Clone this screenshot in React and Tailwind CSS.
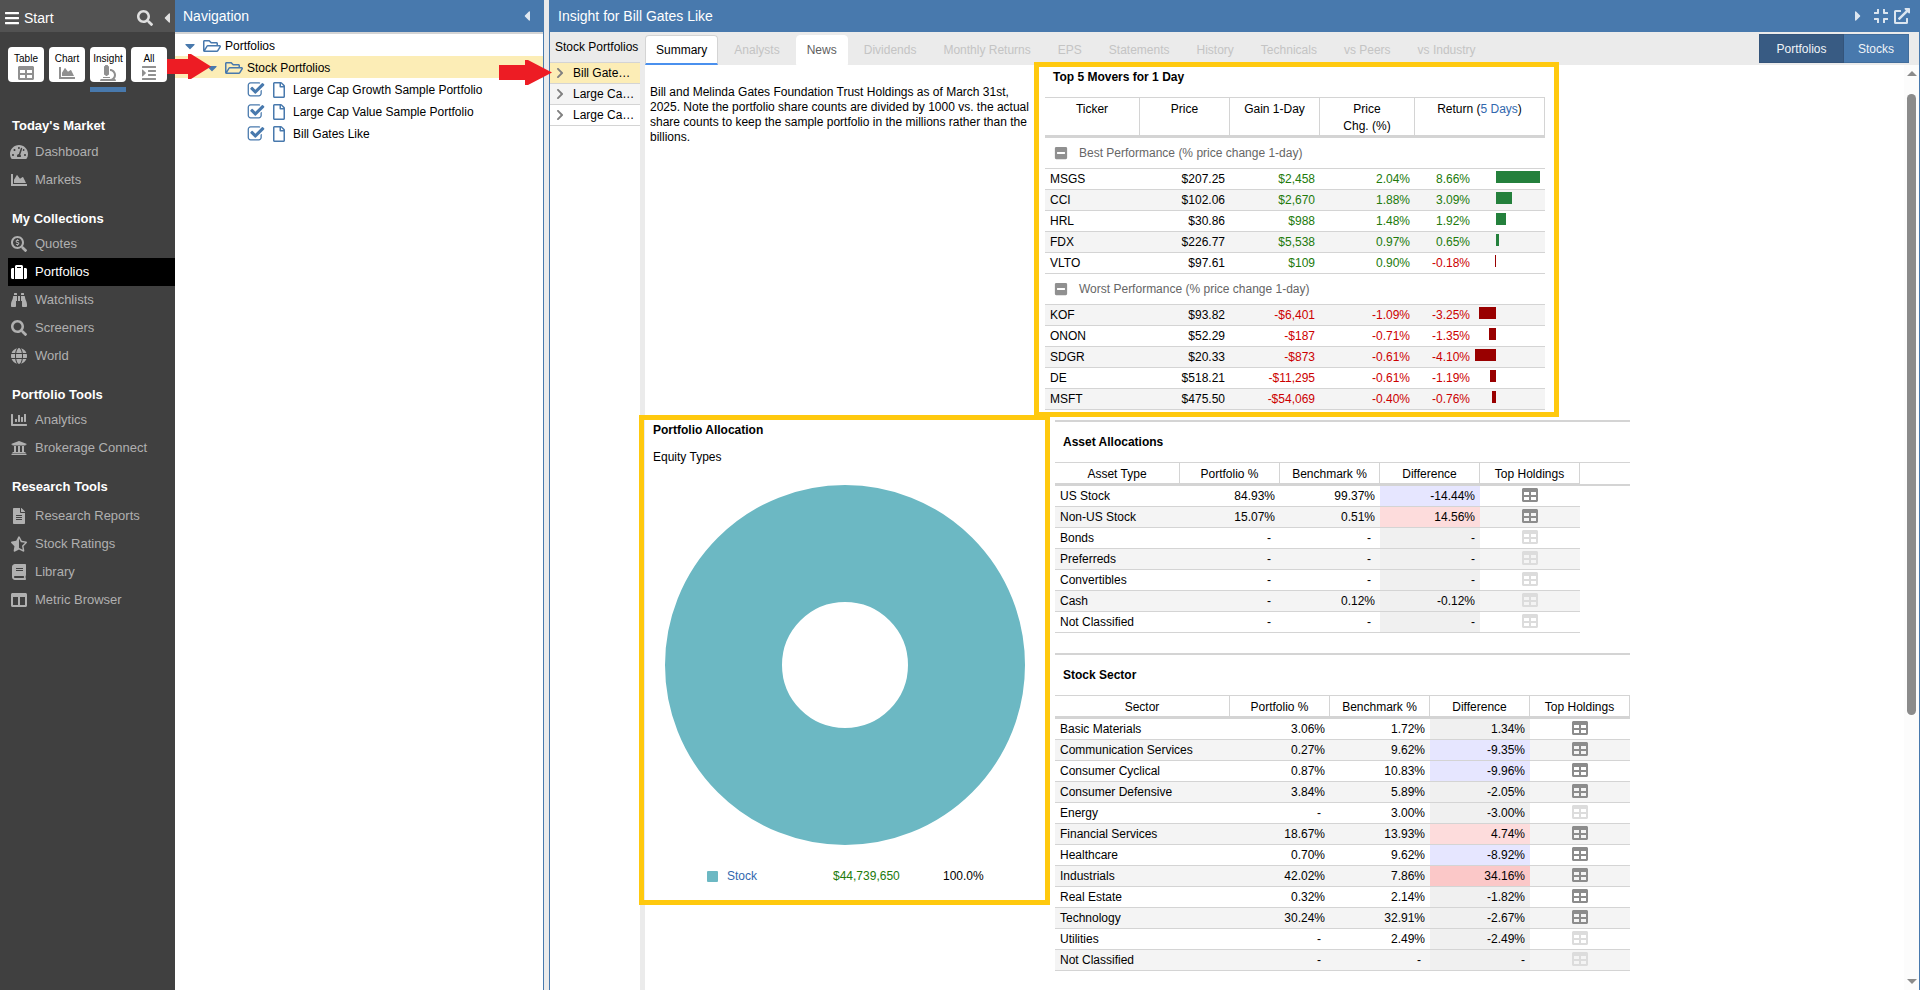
import React from "react";
import {
  FaBars, FaSearch, FaCaretLeft, FaCaretRight, FaCaretDown, FaTable, FaChartArea, FaMicroscope, FaIndent,
  FaTachometerAlt, FaSearchDollar, FaSuitcase, FaBinoculars, FaChartBar, FaUniversity,
  FaFileAlt, FaStarHalfAlt, FaBook, FaColumns, FaRegFolderOpen, FaRegFile, FaChevronRight,
  FaCompress, FaExternalLinkAlt, FaMinusSquare,
} from "react-icons/fa";
import { FaGlobe } from "react-icons/fa6";

const VIEWS = [
  { label: "Table", Icon: FaTable },
  { label: "Chart", Icon: FaChartArea },
  { label: "Insight", Icon: FaMicroscope, active: true },
  { label: "All", Icon: FaIndent },
];

const MENU = [
  { title: "Today's Market", head: "h-5 mt-[26px]", items: [["Dashboard", FaTachometerAlt], ["Markets", FaChartArea]] },
  { title: "My Collections", head: "h-9 pt-[17px]", items: [["Quotes", FaSearchDollar], ["Portfolios", FaSuitcase], ["Watchlists", FaBinoculars], ["Screeners", FaSearch], ["World", FaGlobe]] },
  { title: "Portfolio Tools", head: "h-9 pt-[17px]", items: [["Analytics", FaChartBar], ["Brokerage Connect", FaUniversity]] },
  { title: "Research Tools", head: "h-10 pt-[17px]", items: [["Research Reports", FaFileAlt], ["Stock Ratings", FaStarHalfAlt], ["Library", FaBook], ["Metric Browser", FaColumns]] },
];

const TABS = ["Summary", "Analysts", "News", "Dividends", "Monthly Returns", "EPS", "Statements", "History", "Technicals", "vs Peers", "vs Industry"];

const BEST = [
  ["MSGS", "$207.25", "$2,458", "2.04%", 8.66],
  ["CCI", "$102.06", "$2,670", "1.88%", 3.09],
  ["HRL", "$30.86", "$988", "1.48%", 1.92],
  ["FDX", "$226.77", "$5,538", "0.97%", 0.65],
  ["VLTO", "$97.61", "$109", "0.90%", -0.18],
];
const WORST = [
  ["KOF", "$93.82", "-$6,401", "-1.09%", -3.25],
  ["ONON", "$52.29", "-$187", "-0.71%", -1.35],
  ["SDGR", "$20.33", "-$873", "-0.61%", -4.1],
  ["DE", "$518.21", "-$11,295", "-0.61%", -1.19],
  ["MSFT", "$475.50", "-$54,069", "-0.40%", -0.76],
];

const GREY = "bg-[#f0f0f0]";
const BLUE = "bg-[#e6e6ff]";
const PINK = "bg-[#fddcdc]";
const RED = "bg-[#fbc8c8]";

const ASSETS = [
  ["US Stock", "84.93%", "99.37%", "-14.44%", BLUE],
  ["Non-US Stock", "15.07%", "0.51%", "14.56%", PINK],
  ["Bonds", "-", "-", "-", GREY],
  ["Preferreds", "-", "-", "-", GREY],
  ["Convertibles", "-", "-", "-", GREY],
  ["Cash", "-", "0.12%", "-0.12%", GREY],
  ["Not Classified", "-", "-", "-", GREY],
];
const SECTORS = [
  ["Basic Materials", "3.06%", "1.72%", "1.34%", GREY],
  ["Communication Services", "0.27%", "9.62%", "-9.35%", BLUE],
  ["Consumer Cyclical", "0.87%", "10.83%", "-9.96%", BLUE],
  ["Consumer Defensive", "3.84%", "5.89%", "-2.05%", GREY],
  ["Energy", "-", "3.00%", "-3.00%", GREY],
  ["Financial Services", "18.67%", "13.93%", "4.74%", PINK],
  ["Healthcare", "0.70%", "9.62%", "-8.92%", BLUE],
  ["Industrials", "42.02%", "7.86%", "34.16%", RED],
  ["Real Estate", "0.32%", "2.14%", "-1.82%", GREY],
  ["Technology", "30.24%", "32.91%", "-2.67%", GREY],
  ["Utilities", "-", "2.49%", "-2.49%", GREY],
  ["Not Classified", "-", "-", "-", GREY],
];

function Sidebar() {
  return (
    <aside className="flex w-[175px] shrink-0 flex-col bg-[#404040] text-white">
      <div className="flex h-8 shrink-0 items-center bg-[#525252] pl-1 pt-1">
        <button className="flex items-center gap-1 text-sm">
          <FaBars size={16} />
          Start
        </button>
        <button aria-label="Search" className="ml-auto text-[#e0e0e0]"><FaSearch size={16} /></button>
        <button aria-label="Collapse sidebar" className="ml-1.5 text-[#e0e0e0]"><FaCaretLeft size={16} /></button>
      </div>
      <div className="flex gap-[5px] pl-2 pt-[15px]">
        {VIEWS.map(({ label, Icon, active }) => (
          <div key={label} className="flex flex-col gap-[5px]">
            <button className="flex h-[35px] w-9 flex-col items-center rounded bg-white pt-[5px] text-[10px] leading-[13px] text-black">
              {label}
              <Icon size={16} className="text-[#909090]" />
            </button>
            <span className={active ? "h-[5px] bg-[#4879ad]" : "h-[5px]"} />
          </div>
        ))}
      </div>
      <nav className="text-[13px]">
        {MENU.map(({ title, head, items }) => (
          <section key={title}>
            <h2 className={`pl-3 font-bold leading-4 ${head}`}>{title}</h2>
            {items.map(([name, Icon]) => {
              const on = name === "Portfolios";
              return (
                <a
                  key={name}
                  href="#"
                  className={`ml-2 flex h-7 items-center gap-2 pl-[3px] ${on ? "bg-black text-white" : "text-[#b0b0b0]"}`}
                >
                  <span className="flex w-4 justify-center">
                    <Icon size={name === "Dashboard" ? 18 : 16} className="shrink-0" />
                  </span>
                  {name}
                </a>
              );
            })}
          </section>
        ))}
      </nav>
    </aside>
  );
}

function CheckBox({ label }) {
  return (
    <span className="relative flex size-[18px]">
      <input type="checkbox" defaultChecked aria-label={label} className="size-full appearance-none" />
      <svg viewBox="0 0 1792 1792" className="pointer-events-none absolute inset-0 size-full text-[#4879ad]" fill="currentColor">
        <path d="M1472 930v318q0 119-84.5 203.5t-203.5 84.5h-832q-119 0-203.5-84.5t-84.5-203.5v-832q0-119 84.5-203.5t203.5-84.5h832q63 0 117 25 15 7 18 23 3 17-9 29l-49 49q-10 10-23 10-3 0-9-2-23-6-45-6h-832q-66 0-113 47t-47 113v832q0 66 47 113t113 47h832q66 0 113-47t47-113v-254q0-13 9-22l64-64q10-10 23-10 6 0 12 3 20 8 20 29zm231-489l-814 814q-24 24-57 24t-57-24l-430-430q-24-24-24-57t24-57l110-110q24-24 57-24t57 24l263 263 647-647q24-24 57-24t57 24l110 110q24 24 24 57t-24 57z" />
      </svg>
    </span>
  );
}

function Navigation() {
  return (
    <section className="flex w-[369px] shrink-0 flex-col border-r border-[#4879ad] bg-white">
      <header className="flex h-8 items-center justify-between bg-[#4879ad] pl-2 pr-2 text-sm text-white">
        <h1>Navigation</h1>
        <button aria-label="Collapse navigation"><FaCaretLeft size={16} className="text-[#e0e8f0]" /></button>
      </header>
      <ul className="border-t-2 border-[#d4d4d4] text-black">
        <li className="flex h-[22px] items-center pl-[7px] pt-px">
          <FaCaretDown size={16} className="mr-[5px] text-[#4879ad]" />
          <FaRegFolderOpen size={18} className="mr-1 text-[#4879ad]" />
          Portfolios
        </li>
        <li className="relative flex h-[22px] items-center bg-[#fcedb6] pl-[29px] pt-px">
          <FaCaretDown size={16} className="mr-[5px] text-[#4879ad]" />
          <FaRegFolderOpen size={18} className="mr-1 text-[#4879ad]" />
          Stock Portfolios
          <svg viewBox="0 0 44 25" className="absolute -left-2 -top-0.5 z-10 h-[25px] w-11" fill="#ed1c24">
            <path d="M0 5H21V0H24L44 12.5L24 25H21V20H0Z" />
          </svg>
        </li>
        {["Large Cap Growth Sample Portfolio", "Large Cap Value Sample Portfolio", "Bill Gates Like"].map((name) => (
          <li key={name} className="flex h-[22px] items-center pl-[72px] pt-px">
            <CheckBox label={name} />
            <FaRegFile size={16} className="mx-1.5 text-[#4879ad]" />
            {name}
          </li>
        ))}
      </ul>
    </section>
  );
}

function PortfolioList() {
  const entries = [
    { label: "Bill Gate…", full: "Bill Gates Like", bg: "bg-[#fcedb6]" },
    { label: "Large Ca…", full: "Large Cap Growth Sample Portfolio", bg: "bg-[#f4f4f4]" },
    { label: "Large Ca…", full: "Large Cap Value Sample Portfolio", bg: "bg-white" },
  ];
  return (
    <div className="flex w-[95px] shrink-0 flex-col border-r-[5px] border-[#ebebeb] bg-white">
      <div className="flex h-[31px] items-center whitespace-nowrap border-b border-[#d4d4d4] bg-[#ebebeb] pl-[5px]">Stock Portfolios</div>
      {entries.map(({ label, full, bg }, i) => (
        <button
          key={full}
          title={full}
          className={`relative flex h-[21px] items-center whitespace-nowrap border-b border-[#d4d4d4] pl-1 text-left ${bg}`}
        >
          <FaChevronRight size={12} className="mr-[7px] shrink-0 text-[#808080]" />
          {label}
          {i === 0 && (
            <svg viewBox="0 0 53 25" className="absolute -left-[51px] -top-[3px] z-10 h-[25px] w-[53px]" fill="#ed1c24">
              <path d="M0 5H26V0H29L53 12.5L29 25H26V20H0Z" />
            </svg>
          )}
        </button>
      ))}
    </div>
  );
}

function TabBar() {
  return (
    <div className="flex h-[33px] shrink-0 items-start bg-[#ebebeb] pr-2.5">
      <div className="flex gap-[5px] pt-[3px]">
        {TABS.map((t) => {
          let look = "border-transparent text-[#c4c4c4]";
          if (t === "Summary") look = "border-[#d4d4d4] border-b-2 border-b-[#4a90ee] bg-white text-black";
          if (t === "News") look = "border-white bg-white text-[#606060]";
          return (
            <button key={t} className={`h-[30px] whitespace-nowrap rounded-t border px-2.5 ${look}`}>{t}</button>
          );
        })}
      </div>
      <div className="ml-auto flex pt-0.5 text-[#f0f4f8]">
        <button className="h-[29px] w-[85px] border border-[#34547a] bg-[#385b83]">Portfolios</button>
        <button className="h-[29px] w-[65px] border border-l-0 border-[#416d9c] bg-[#4879ad]">Stocks</button>
      </div>
    </div>
  );
}

const TH = "border-b-[3px] border-r border-t border-[#d4d4d4] px-0 pb-0 font-normal";
const TD = "h-[21px] border-b border-[#d4d4d4] px-[5px] py-0 leading-4";

function tone(v) {
  return String(v).startsWith("-") ? "text-[#cc0000]" : "text-[#217a0b]";
}

function MoverGroup({ title, rows, shade }) {
  return (
    <tbody>
      <tr>
        <td colSpan={5} className="h-[31px] border-b border-[#d4d4d4] px-[9px] py-0 text-[#666]">
          <button className="flex items-center gap-[11px]">
            <FaMinusSquare size={14} className="text-[#909090]" />
            {title}
          </button>
        </td>
      </tr>
      {rows.map(([ticker, price, gain, chg, ret], i) => (
        <tr key={ticker} className={i % 2 === shade ? "bg-[#f4f4f4]" : "bg-white"}>
          <td className={TD}>{ticker}</td>
          <td className={`${TD} text-right`}>{price}</td>
          <td className={`${TD} text-right ${tone(gain)}`}>{gain}</td>
          <td className={`${TD} text-right ${tone(chg)}`}>{chg}</td>
          <td className={TD}>
            <div className={`flex ${tone(ret)}`}>
              <span className="w-[50px] text-right">{ret.toFixed(2)}%</span>
              <span className="flex h-3 w-[26px] justify-end">
                {ret < 0 && <span className="bg-[#990000]" style={{ width: Math.round(-ret * 5.1) }} />}
              </span>
              <span className="flex h-3 w-11">
                {ret > 0 && <span className="bg-[#24803c]" style={{ width: Math.round(ret * 5.08) }} />}
              </span>
            </div>
          </td>
        </tr>
      ))}
    </tbody>
  );
}

function Movers() {
  return (
    <section className="relative w-[500px]">
      <h2 className="h-8 pl-2 pt-1 font-bold leading-4">Top 5 Movers for 1 Day</h2>
      <table className="w-full table-fixed border-separate border-spacing-0">
        <colgroup>
          <col className="w-[95px]" />
          <col className="w-[90px]" />
          <col className="w-[90px]" />
          <col className="w-[95px]" />
          <col className="w-[130px]" />
        </colgroup>
        <thead>
          <tr className="h-[41px] align-top leading-[17px]">
            <th className={`${TH} pt-[3px]`}>Ticker</th>
            <th className={`${TH} pt-[3px]`}>Price</th>
            <th className={`${TH} pt-[3px]`}>Gain 1-Day</th>
            <th className={`${TH} pt-[3px]`}>Price<br />Chg. (%)</th>
            <th className={`${TH} pt-[3px]`}>Return (<a href="#" className="text-[#3168ae]">5 Days</a>)</th>
          </tr>
        </thead>
        <MoverGroup title="Best Performance (% price change 1-day)" rows={BEST} shade={1} />
        <MoverGroup title="Worst Performance (% price change 1-day)" rows={WORST} shade={0} />
      </table>
      <div className="pointer-events-none absolute -bottom-[7px] -left-[11px] -right-3.5 -top-[3px] border-[5px] border-[#ffc90e]" />
    </section>
  );
}

function Allocation() {
  return (
    <section className="relative w-[405px] shrink-0 pl-2">
      <h2 className="pt-0.5 font-bold leading-4">Portfolio Allocation</h2>
      <h3 className="pt-[11px] leading-4">Equity Types</h3>
      <svg viewBox="0 0 360 360" role="img" aria-label="Stock 100.0%" className="ml-3 mt-5 size-[360px]">
        <circle cx="180" cy="180" r="121.5" fill="none" stroke="#6cb8c3" strokeWidth="117" />
      </svg>
      <div className="mt-[23px] flex items-center pl-[54px] leading-4">
        <span className="mr-[9px] size-[11px] rounded-[1px] bg-[#6cb8c3]" />
        <a href="#" className="w-[106px] text-[#3168ae]">Stock</a>
        <span className="w-[110px] text-[#217a0b]">$44,739,650</span>
        <span>100.0%</span>
      </div>
      <div className="pointer-events-none absolute -bottom-[21px] -left-[6px] right-0 -top-[5px] border-[5px] border-[#ffc90e]" />
    </section>
  );
}

function Breakdown({ title, first, rows, firstWidth, filler }) {
  return (
    <section className="border-t-2 border-[#d4d4d4]">
      <h2 className="flex h-10 items-center pl-2 font-bold">{title}</h2>
      <table className="w-full table-fixed border-separate border-spacing-0">
        <colgroup>
          <col className={firstWidth} />
          <col className="w-[100px]" />
          <col className="w-[100px]" />
          <col className="w-[100px]" />
          <col className="w-[100px]" />
          {filler && <col className="w-[50px]" />}
        </colgroup>
        <thead>
          <tr className="h-6 leading-4">
            <th className={`${TH} pt-0.5`}>{first}</th>
            <th className={`${TH} pt-0.5`}>Portfolio %</th>
            <th className={`${TH} pt-0.5`}>Benchmark %</th>
            <th className={`${TH} pt-0.5`}>Difference</th>
            <th className={`${TH} pt-0.5`}>Top Holdings</th>
            {filler && <td className="border-b-2 border-t border-[#d4d4d4] p-0" />}
          </tr>
        </thead>
        <tbody>
          {rows.map(([name, port, bench, diff, tint], i) => {
            const empty = port === "-";
            return (
              <tr key={name} className={i % 2 ? "bg-[#f4f4f4]" : "bg-white"}>
                <td className={TD}>{name}</td>
                <td className={`${TD} text-right`}>{empty ? <span className="pr-1">-</span> : port}</td>
                <td className={`${TD} text-right`}>{bench === "-" ? <span className="pr-1">-</span> : bench}</td>
                <td className={`${TD} text-right ${tint}`}>{diff}</td>
                <td className={TD}>
                  <button aria-label={`Top holdings: ${name}`} disabled={empty} className="mx-auto block pb-0.5 text-[#8c8c8c] disabled:text-[#dcdcdc]">
                    <FaTable size={16} />
                  </button>
                </td>
                {filler && <td className="bg-white p-0" />}
              </tr>
            );
          })}
        </tbody>
      </table>
    </section>
  );
}

function ScrollBar() {
  return (
    <div className="flex w-[15px] shrink-0 flex-col items-center bg-[#fcfcfc] py-1.5">
      <svg viewBox="0 0 10 5" className="h-[5px] w-2.5 shrink-0" fill="#8b8b8b"><path d="M0 5L5 0L10 5Z" /></svg>
      <div className="mt-[18px] h-[68%] w-[9px] rounded-full bg-[#8b8b8b]" />
      <svg viewBox="0 0 10 5" className="mt-auto h-[5px] w-2.5 shrink-0" fill="#8b8b8b"><path d="M0 0L5 5L10 0Z" /></svg>
    </div>
  );
}

function Insight() {
  return (
    <section className="flex min-w-0 flex-1 flex-col border-x border-[#4879ad] bg-white">
      <header className="flex h-8 shrink-0 items-center bg-[#4879ad] pl-2 pr-[9px] text-sm text-white">
        <h1>Insight for Bill Gates Like</h1>
        <div className="ml-auto flex items-center text-[#dce6f0]">
          <button aria-label="Expand"><FaCaretRight size={16} /></button>
          <button aria-label="Restore size" className="ml-[7px]"><FaCompress size={16} /></button>
          <button aria-label="Open in new window" className="ml-[5px]"><FaExternalLinkAlt size={16} /></button>
        </div>
      </header>
      <div className="flex min-h-0 flex-1">
        <PortfolioList />
        <div className="flex min-w-0 flex-1 flex-col">
          <TabBar />
          <div className="flex min-h-0 flex-1">
            <main className="min-w-0 flex-1 text-black">
              <div className="flex h-[355px]">
                <p className="w-[400px] shrink-0 pl-[5px] pr-[11px] pt-5 leading-[15px]">
                  Bill and Melinda Gates Foundation Trust Holdings as of March 31st, 2025. Note the portfolio share counts
                  are divided by 1000 vs. the actual share counts to keep the sample portfolio in the millions rather
                  than the billions.
                </p>
                <div>
                  <Movers />
                </div>
              </div>
              <div className="flex items-start gap-[5px]">
                <Allocation />
                <div className="flex w-[575px] flex-col gap-5">
                  <Breakdown title="Asset Allocations" first="Asset Type" rows={ASSETS} firstWidth="w-[125px]" filler />
                  <Breakdown title="Stock Sector" first="Sector" rows={SECTORS} firstWidth="w-[175px]" />
                </div>
              </div>
            </main>
            <ScrollBar />
          </div>
        </div>
      </div>
    </section>
  );
}

export default function App() {
  return (
    <div className="flex h-screen overflow-hidden bg-[#ebebeb] font-['Liberation_Sans',Arial,sans-serif] text-xs">
      <Sidebar />
      <div className="flex min-w-0 flex-1 gap-[5px]">
        <Navigation />
        <Insight />
      </div>
    </div>
  );
}
